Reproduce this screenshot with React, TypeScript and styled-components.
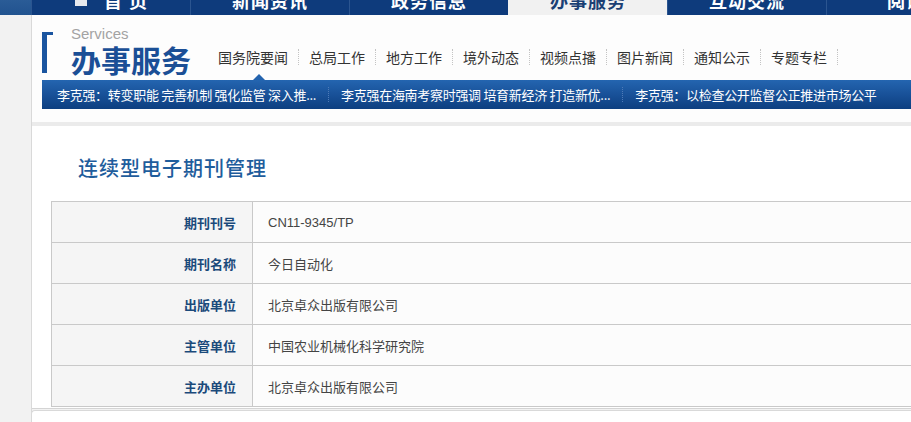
import React from "react";
import styled, { createGlobalStyle } from "styled-components";

const Global = createGlobalStyle`
  html, body { margin: 0; padding: 0; }
  body {
    background: #f2f2f2;
    overflow: hidden;
    font-family: "Liberation Sans", "Noto Sans CJK SC", sans-serif;
  }
`;

const Page = styled.div`
  width: 1200px;
  margin-top: -25px;
`;

const TopNav = styled.nav`
  display: flex;
  height: 40px;
  background: #0e3b7c;
`;

const NavLead = styled.div`
  width: 31px;
  flex: none;
  background: linear-gradient(180deg, #3a6aa3 0%, #21538f 100%);
`;

const NavItem = styled.div<{ $active?: boolean }>`
  width: 159px;
  flex: none;
  box-sizing: border-box;
  display: flex;
  align-items: center;
  justify-content: center;
  gap: 16px;
  padding-top: 9px;
  font-size: 18px;
  font-weight: bold;
  color: ${(p) => (p.$active ? "#1b3f74" : "#ffffff")};
  background: ${(p) => (p.$active ? "#f1f1f1" : "transparent")};
  border-left: 1px solid ${(p) => (p.$active ? "#f1f1f1" : "#2b5590")};
  &:first-of-type { border-left: none; }
  letter-spacing: 1px;
`;

const HomeIcon = styled.svg`
  width: 14px;
  height: 14px;
  flex: none;
`;

const Main = styled.div`
  margin-left: 31px;
  border-left: 1px solid #d9d9d9;
`;

const Header = styled.header`
  background: #fdfdfd;
  padding: 0 0 13px 10px;
  border-bottom: 4px solid #ebebeb;
`;

const HeaderTop = styled.div`
  display: flex;
  height: 65px;
`;

const Brand = styled.div`
  width: 176px;
  flex: none;
  display: flex;
  gap: 18px;
`;

const Bracket = styled.div`
  width: 6px;
  height: 38px;
  margin-top: 17px;
  border-left: 5px solid #1a55a0;
  border-top: 3px solid #1a55a0;
`;

const BrandText = styled.div`
  display: flex;
  flex-direction: column;
  margin-top: 10px;
`;

const BrandSub = styled.div`
  font-family: "Liberation Sans", Arial, sans-serif;
  font-size: 15px;
  line-height: 17px;
  color: #a3a3a3;
`;

const BrandBig = styled.div`
  font-family: "Noto Sans CJK SC", sans-serif;
  font-size: 30px;
  line-height: 34px;
  font-weight: bold;
  color: #1b4f96;
`;

const SubNav = styled.ul`
  display: flex;
  align-items: center;
  list-style: none;
  margin: 34px 0 0 0;
  padding: 0;
  height: 16px;
`;

const SubLink = styled.li<{ $active?: boolean }>`
  position: relative;
  font-family: "Noto Sans CJK SC", sans-serif;
  font-size: 14px;
  line-height: 16px;
  color: #333;
  padding: 0 10px;
  border-right: 1px dotted #c4c4c4;
  &:first-child { padding-left: 0; }
  ${(p) =>
    p.$active &&
    `
    &::after {
      content: "";
      position: absolute;
      left: calc(50% - 5px);
      top: calc(100% + 9px);
      border-left: 6px solid transparent;
      border-right: 6px solid transparent;
      border-bottom: 6px solid #2363ae;
    }
  `}
`;

const Ticker = styled.div`
  display: flex;
  align-items: center;
  height: 29px;
  padding-left: 15px;
  background: linear-gradient(180deg, #2465b0 0%, #174f96 55%, #0d3f80 100%);
`;

const TickerItem = styled.span`
  font-family: "Noto Sans CJK SC", sans-serif;
  font-size: 13px;
  letter-spacing: -0.3px;
  color: #fff;
  white-space: pre;
`;

const TickerSep = styled.span`
  width: 0;
  height: 15px;
  margin: 0 12px;
  border-left: 1px dotted #4e7bb8;
`;

const Card = styled.section`
  background: #fff;
  padding: 30px 0 1px 19px;
  border-bottom: 1px solid #d4d4d4;
`;

const Title = styled.h2`
  margin: 0 0 21px 27px;
  font-family: "Noto Sans CJK SC", sans-serif;
  font-size: 20px;
  line-height: 24px;
  font-weight: 500;
  letter-spacing: 1px;
  color: #1f5d9c;
`;

const Table = styled.table`
  width: 100%;
  border-collapse: collapse;
  border: 1px solid #c9c9c9;
  border-right: none;
`;

const Row = styled.tr`
  height: 41px;
  border-bottom: 1px solid #c9c9c9;
`;

const Label = styled.th`
  width: 184px;
  padding: 0 16px 0 0;
  text-align: right;
  background: #f5f5f5;
  border-right: 1px solid #c9c9c9;
  font-family: "Noto Sans CJK SC", sans-serif;
  font-size: 13px;
  font-weight: bold;
  color: #1b4a7b;
`;

const Value = styled.td`
  padding: 0 0 0 15px;
  background: #fcfcfc;
  font-family: "Liberation Sans", "Noto Sans CJK SC", sans-serif;
  font-size: 13px;
  color: #444;
`;

const NextCard = styled.div`
  margin-top: 1px;
  height: 40px;
  background: #fff;
  border-top: 1px solid #d9d9d9;
  border-left: 1px solid #d9d9d9;
  border-top-left-radius: 4px;
  margin-left: -1px;
`;

const navItems = ["首 页", "新闻资讯", "政务信息", "办事服务", "互动交流", "阅读"];
const subLinks = ["国务院要闻", "总局工作", "地方工作", "境外动态", "视频点播", "图片新闻", "通知公示", "专题专栏"];
const tickers = [
  "李克强：转变职能 完善机制 强化监管 深入推...",
  "李克强在海南考察时强调 培育新经济 打造新优...",
  "李克强：以检查公开监督公正推进市场公平",
];
const rows: [string, string][] = [
  ["期刊刊号", "CN11-9345/TP"],
  ["期刊名称", "今日自动化"],
  ["出版单位", "北京卓众出版有限公司"],
  ["主管单位", "中国农业机械化科学研究院"],
  ["主办单位", "北京卓众出版有限公司"],
];

export default function App() {
  return (
    <>
      <Global />
      <Page>
        <TopNav>
          <NavLead />
          {navItems.map((t, i) => (
            <NavItem key={t} $active={i === 3}>
              {i === 0 && (
                <HomeIcon viewBox="0 0 14 14">
                  <rect x="1" y="1" width="12" height="12" fill="#e6e9ee" />
                </HomeIcon>
              )}
              <span>{t}</span>
            </NavItem>
          ))}
        </TopNav>
        <Main>
          <Header>
            <HeaderTop>
              <Brand>
                <Bracket />
                <BrandText>
                  <BrandSub>Services</BrandSub>
                  <BrandBig>办事服务</BrandBig>
                </BrandText>
              </Brand>
              <SubNav>
                {subLinks.map((t, i) => (
                  <SubLink key={t} $active={i === 0}>
                    {t}
                  </SubLink>
                ))}
              </SubNav>
            </HeaderTop>
            <Ticker>
              {tickers.map((t, i) => (
                <React.Fragment key={t}>
                  {i > 0 && <TickerSep />}
                  <TickerItem>{t}</TickerItem>
                </React.Fragment>
              ))}
            </Ticker>
          </Header>
          <Card>
            <Title>连续型电子期刊管理</Title>
            <Table>
              <tbody>
                {rows.map(([k, v]) => (
                  <Row key={k}>
                    <Label>{k}</Label>
                    <Value>{v}</Value>
                  </Row>
                ))}
              </tbody>
            </Table>
          </Card>
          <NextCard />
        </Main>
      </Page>
    </>
  );
}
